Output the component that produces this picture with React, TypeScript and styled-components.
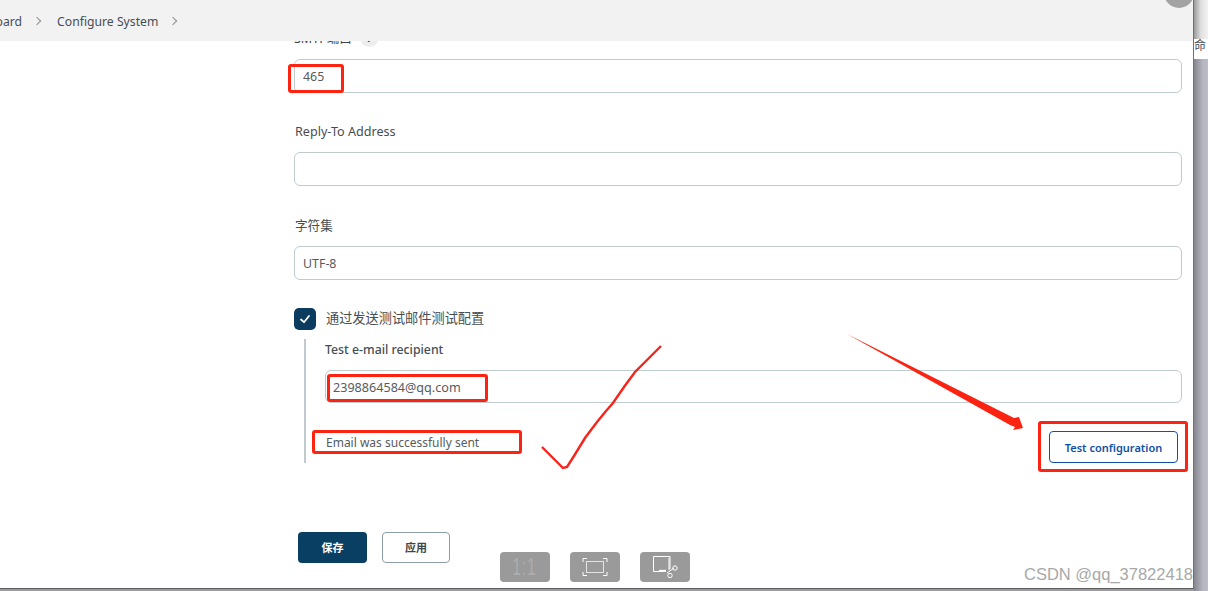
import styled, { createGlobalStyle } from "styled-components";

const GlobalStyle = createGlobalStyle`
  html, body {
    margin: 0;
    padding: 0;
    background: #9a9a9f;
    overflow: hidden;
  }
  * {
    box-sizing: border-box;
  }
`;

const fontStack = `"Noto Sans", "Noto Sans CJK SC", sans-serif`;

const Field: React.FC<{ label: string; value?: string }> = ({ label, value }) => (
  <FieldRow>
    <Label>{label}</Label>
    <TextInput readOnly value={value ?? ""} />
  </FieldRow>
);

const App: React.FC = () => {
  return (
    <Shell>
      <GlobalStyle />
      <Window>
        <Breadcrumb>
          <Crumb>Dashboard</Crumb>
          <Chevron />
          <Crumb>Configure System</Crumb>
          <Chevron />
          <TopBlob />
        </Breadcrumb>
        <Form>
          <ClippedLabel>
            SMTP端口 <HelpDot>?</HelpDot>
          </ClippedLabel>
          <TextInput readOnly value="465" />
          <Field label="Reply-To Address" />
          <Field label="字符集" value="UTF-8" />
          <CheckRow>
            <CheckBox>
              <svg width="12" height="12" viewBox="0 0 12 12" fill="none">
                <path d="M2 6.5 L5 9.2 L10 3" stroke="#fff" strokeWidth="1.8" strokeLinecap="round" strokeLinejoin="round" />
              </svg>
            </CheckBox>
            <CheckText>通过发送测试邮件测试配置</CheckText>
          </CheckRow>
          <TestBlock>
            <NestedLabel>Test e-mail recipient</NestedLabel>
            <EmailInput readOnly value="2398864584@qq.com" />
            <ResultRow>
              <ResultText>Email was successfully sent</ResultText>
              <TestButton>Test configuration</TestButton>
            </ResultRow>
          </TestBlock>
          <Actions>
            <SaveButton>保存</SaveButton>
            <ApplyButton>应用</ApplyButton>
          </Actions>
        </Form>
        <Mark $x={288} $y={64} $w={56} $h={29} />
        <Mark $x={327} $y={374} $w={161} $h={28} />
        <Mark $x={312} $y={430} $w={210} $h={24} />
        <Mark $x={1038} $y={421} $w={150} $h={51} />
        <Scribble width="1194" height="588" viewBox="0 0 1194 588" fill="none">
          <path
            d="M542 447 L552 457 L563 468 L567 467 L574 456 L585 438 L597 422 L606 411 L613 403 L624 387 L635 372 L648 359 L661 346"
            stroke="#f5241c"
            strokeWidth="2.4"
          />
          <path d="M847 334 L1014 418 L1019 417 L1023 428 L1013 430 L1015 427 L1010 425 Z" fill="#fb2412" />
        </Scribble>
        <ViewerTools>
          <ViewerButton>
            <OneToOne>1:1</OneToOne>
          </ViewerButton>
          <ViewerButton>
            <svg width="26" height="20" viewBox="0 0 26 20" fill="none" stroke="#fff" strokeWidth="1">
              <path d="M1 5 V1.5 H5 M21 1.5 H25 V5 M1 15 V18.5 H5 M21 18.5 H25 V15" />
              <rect x="4.5" y="4.5" width="17" height="11" stroke="#e4e4e4" />
            </svg>
          </ViewerButton>
          <ViewerButton>
            <svg width="26" height="24" viewBox="0 0 26 24" fill="none" stroke="#fff" strokeWidth="1">
              <path d="M18 14 V1.5 H1.5 V16.5 H14" />
              <path d="M7 15.5 H14" strokeWidth="1.4" />
              <path d="M17 3 V15 M15 18 L22 13" />
              <circle cx="23" cy="13" r="2.2" />
              <circle cx="18" cy="20.5" r="2.2" />
            </svg>
          </ViewerButton>
        </ViewerTools>
        <Watermark>CSDN @qq_37822418</Watermark>
      </Window>
      <SideStrip>
        <SideTop />
        <SideGap>命</SideGap>
        <SideBottom />
      </SideStrip>
    </Shell>
  );
};

export default App;

const Shell = styled.div`
  display: flex;
  width: 1208px;
  height: 591px;
  overflow: hidden;
  font-family: ${fontStack};
  color: #3b4247;
`;

const Window = styled.div`
  position: relative;
  width: 1194px;
  height: 589px;
  background: #fff;
  border-right: 1px solid #70707a;
  border-bottom: 1px solid #5c5c5c;
  overflow: hidden;
`;

const Breadcrumb = styled.div`
  position: relative;
  z-index: 1;
  display: flex;
  align-items: center;
  height: 41px;
  margin-left: -41px;
  padding-top: 1px;
  background: #f2f2f2;
  font-size: 12.2px;
`;

const Crumb = styled.span`
  color: #474e52;
`;

const Chevron = styled.span`
  width: 6px;
  height: 6px;
  margin: 0 17px 0 12px;
  border-top: 1px solid #8d9194;
  border-right: 1px solid #8d9194;
  transform: rotate(45deg);
`;

const TopBlob = styled.div`
  position: absolute;
  top: -22px;
  right: -1px;
  width: 30px;
  height: 30px;
  border-radius: 50%;
  background: #a3a3a3;
`;

const Form = styled.div`
  display: flex;
  flex-direction: column;
  margin-top: -14px;
  padding: 0 11px 0 294px;
`;

const ClippedLabel = styled.div`
  display: flex;
  align-items: center;
  gap: 8px;
  height: 20px;
  margin-bottom: 12px;
  font-size: 12.5px;
`;

const HelpDot = styled.span`
  display: grid;
  place-items: center;
  width: 19px;
  height: 19px;
  border-radius: 50%;
  background: #ededed;
  font-size: 11px;
  font-weight: 700;
`;

const FieldRow = styled.div`
  display: flex;
  flex-direction: column;
  margin-top: 30px;

  & + & {
    margin-top: 31px;
  }
`;

const Label = styled.label`
  height: 18px;
  margin-bottom: 11px;
  padding-left: 1px;
  font-size: 12.6px;
  line-height: 18px;
  color: #474e52;
`;

const TextInput = styled.input`
  width: 100%;
  height: 34px;
  padding: 1px 8px 0;
  border: 1px solid #c0cbd0;
  border-radius: 6px;
  outline: none;
  background: #fff;
  font-family: ${fontStack};
  font-size: 12.4px;
  color: #565c60;
`;

const EmailInput = styled(TextInput)`
  padding: 2px 7px 0;
  font-size: 12.6px;
`;

const CheckRow = styled.div`
  display: flex;
  align-items: center;
  gap: 10px;
  height: 22px;
  margin-top: 28px;
`;

const CheckBox = styled.span`
  display: grid;
  place-items: center;
  width: 22px;
  height: 22px;
  border-radius: 5px;
  background: #0b3c5f;
`;

const CheckText = styled.span`
  padding-bottom: 3px;
  font-size: 13.2px;
  color: #474e52;
`;

const TestBlock = styled.div`
  display: flex;
  flex-direction: column;
  height: 124px;
  margin: 9px 0 0 10px;
  padding-left: 19px;
  border-left: 2px solid #bfcbcf;
`;

const NestedLabel = styled.div`
  height: 18px;
  margin: 2px 0 11px;
  font-size: 12.3px;
  font-weight: 500;
  line-height: 18px;
  color: #474e52;
`;

const ResultRow = styled.div`
  display: flex;
  align-items: center;
  justify-content: space-between;
  margin-top: 28px;
  padding-right: 4px;
`;

const ResultText = styled.span`
  padding: 0 0 10px 1px;
  font-size: 12px;
  color: #565c60;
`;

const TestButton = styled.button`
  width: 129px;
  height: 32px;
  border: 1px solid #0f4fa8;
  border-radius: 4px;
  background: #fff;
  font-family: ${fontStack};
  font-size: 11px;
  font-weight: 600;
  color: #0f4fa8;
`;

const Actions = styled.div`
  display: flex;
  gap: 15px;
  margin-top: 69px;
  padding-left: 4px;
`;

const SaveButton = styled.button`
  width: 69px;
  height: 31px;
  padding: 0 0 2px;
  border: none;
  border-radius: 4px;
  background: #083f63;
  font-family: ${fontStack};
  font-size: 11px;
  font-weight: 700;
  color: #fff;
`;

const ApplyButton = styled.button`
  width: 68px;
  height: 31px;
  padding: 0 0 2px;
  border: 1px solid #8e9ea8;
  border-radius: 4px;
  background: #fff;
  font-family: ${fontStack};
  font-size: 11px;
  font-weight: 600;
  color: #3f4649;
`;

const Mark = styled.div<{ $x: number; $y: number; $w: number; $h: number }>`
  position: absolute;
  left: ${(p) => p.$x}px;
  top: ${(p) => p.$y}px;
  width: ${(p) => p.$w}px;
  height: ${(p) => p.$h}px;
  border: 3px solid #fb2412;
  border-radius: 3px;
`;

const Scribble = styled.svg`
  position: absolute;
  left: 0;
  top: 0;
  pointer-events: none;
`;

const ViewerTools = styled.div`
  position: absolute;
  left: 500px;
  top: 552px;
  display: flex;
  gap: 20px;
`;

const ViewerButton = styled.div`
  display: grid;
  place-items: center;
  width: 50px;
  height: 30px;
  border-radius: 4px;
  background: #9a9a9a;
`;

const OneToOne = styled.span`
  font-family: "Liberation Sans", sans-serif;
  font-size: 24px;
  letter-spacing: 2px;
  color: #aeaeae;
  transform: scaleX(0.62);
`;

const Watermark = styled.div`
  position: absolute;
  right: 0;
  top: 564px;
  font-family: "Liberation Sans", sans-serif;
  font-size: 16.5px;
  line-height: 20px;
  color: #a8a8a8;
  white-space: nowrap;
`;

const SideStrip = styled.div`
  display: flex;
  flex-direction: column;
  width: 14px;
`;

const SideTop = styled.div`
  height: 39px;
  background: linear-gradient(90deg, #9a9a9a, #e0e0e0 50%, #f2f2f2);
`;

const SideGap = styled.div`
  height: 20px;
  overflow: hidden;
  background: #fff;
  font-size: 12px;
  line-height: 14px;
  color: #3c4a5a;
`;

const SideBottom = styled.div`
  flex: 1;
  background: linear-gradient(90deg, #86868e, #b4b5bf 60%, #bcbdc7);
`;
